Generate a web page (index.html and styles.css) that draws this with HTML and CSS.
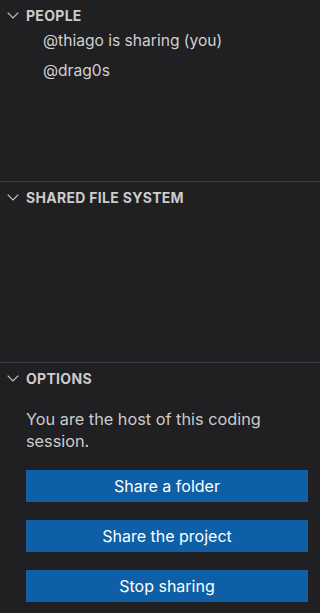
FILE: index.html
```html
<!DOCTYPE html>
<html>
<head>
<meta charset="utf-8">
<link rel="stylesheet" href="styles.css">
</head>
<body>
<div class="panel">
  <section class="section people">
    <div class="header">
      <svg class="chev" viewBox="0 0 12 7" width="12" height="7"><path d="M0.7 0.7 L6 6 L11.3 0.7" fill="none" stroke="#c5c5c5" stroke-width="1.2"/></svg>
      <span>PEOPLE</span>
    </div>
    <div class="items">
      <div class="item">@thiago is sharing (you)</div>
      <div class="item">@drag0s</div>
    </div>
  </section>
  <section class="section files">
    <div class="header">
      <svg class="chev" viewBox="0 0 12 7" width="12" height="7"><path d="M0.7 0.7 L6 6 L11.3 0.7" fill="none" stroke="#c5c5c5" stroke-width="1.2"/></svg>
      <span>SHARED FILE SYSTEM</span>
    </div>
  </section>
  <section class="section options">
    <div class="header">
      <svg class="chev" viewBox="0 0 12 7" width="12" height="7"><path d="M0.7 0.7 L6 6 L11.3 0.7" fill="none" stroke="#c5c5c5" stroke-width="1.2"/></svg>
      <span>OPTIONS</span>
    </div>
    <div class="body">
      <p class="msg">You are the host of this coding session.</p>
      <div class="buttons">
        <button class="btn">Share a folder</button>
        <button class="btn">Share the project</button>
        <button class="btn">Stop sharing</button>
      </div>
    </div>
  </section>
</div>
</body>
</html>
```

FILE: styles.css
```css
html, body {
  margin: 0;
  padding: 0;
  background: #201f22;
}
body {
  width: 320px;
  height: 613px;
  overflow: hidden;
  font-family: Inter, "Liberation Sans", Arial, sans-serif;
  color: #cccccc;
}
.panel {
  display: flex;
  flex-direction: column;
}
.section {
  box-sizing: border-box;
}
.people {
  height: 181px;
}
.files {
  height: 181px;
  border-top: 1px solid #3b3a3e;
}
.options {
  border-top: 1px solid #3b3a3e;
}
.header {
  height: 30px;
  display: flex;
  align-items: center;
  padding-left: 7px;
  font-weight: bold;
  font-size: 14px;
  letter-spacing: 0.3px;
  color: #cccccc;
}
.chev {
  margin-right: 7px;
  margin-top: 1px;
}
.items {
  margin-top: -4px;
}
.item {
  height: 30px;
  line-height: 30px;
  padding-left: 43px;
  font-size: 15.6px;
  color: #d0d0d0;
}
.body {
  padding: 15px 12px 0 26px;
}
.msg {
  margin: 0;
  font-size: 16.3px;
  line-height: 22px;
  color: #cccccc;
  width: 250px;
}
.buttons {
  margin-top: 18px;
  display: flex;
  flex-direction: column;
  gap: 18px;
}
.btn {
  height: 32px;
  width: 282px;
  border: none;
  background: #0e5fa6;
  color: #ffffff;
  font-family: Inter, "Liberation Sans", Arial, sans-serif;
  font-size: 16px;
  padding: 0;
}
```
